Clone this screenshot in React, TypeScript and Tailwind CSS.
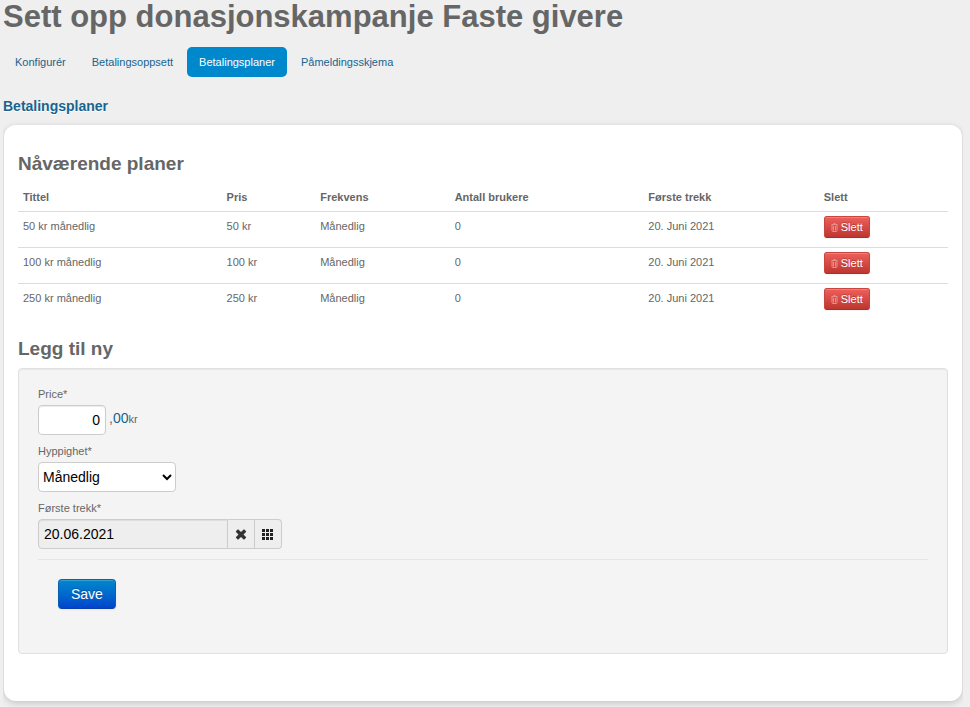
import React, { useState } from 'react';

interface Plan {
  id: number;
  title: string;
  price: string;
  frequency: string;
  users: number;
  firstCharge: string;
}

const tabs = [
  { id: 'konfigurer', label: 'Konfigurér' },
  { id: 'oppsett', label: 'Betalingsoppsett' },
  { id: 'planer', label: 'Betalingsplaner' },
  { id: 'skjema', label: 'Påmeldingsskjema' },
];

const initialPlans: Plan[] = [
  { id: 1, title: '50 kr månedlig', price: '50 kr', frequency: 'Månedlig', users: 0, firstCharge: '20. Juni 2021' },
  { id: 2, title: '100 kr månedlig', price: '100 kr', frequency: 'Månedlig', users: 0, firstCharge: '20. Juni 2021' },
  { id: 3, title: '250 kr månedlig', price: '250 kr', frequency: 'Månedlig', users: 0, firstCharge: '20. Juni 2021' },
];

const columns = ['Tittel', 'Pris', 'Frekvens', 'Antall brukere', 'Første trekk', 'Slett'];

const TrashIcon: React.FC = () => (
  <svg width="7" height="9" viewBox="0 0 7 9" fill="none" stroke="currentColor" aria-hidden="true">
    <path d="M0.5 1.5h6M1 2v5.5q0 1 1 1h3q1 0 1-1V2M2.5 0.5h2M2.5 3v4.5M4.5 3v4.5" />
  </svg>
);

const RemoveIcon: React.FC = () => (
  <svg width="12" height="11" viewBox="0 0 12 11" fill="currentColor" aria-hidden="true">
    <path d="M1 2.3 2.6 0.6Q3 0.3 3.4 0.6L6 3 8.6 0.6Q9 0.3 9.4 0.6L11 2.3Q11.3 2.7 11 3L8.5 5.5 11 8Q11.3 8.3 11 8.7L9.4 10.4Q9 10.7 8.6 10.4L6 8 3.4 10.4Q3 10.7 2.6 10.4L1 8.7Q0.7 8.3 1 8L3.5 5.5 1 3Q0.7 2.7 1 2.3Z" />
  </svg>
);

const GridIcon: React.FC = () => (
  <svg width="12" height="11" viewBox="0 0 12 11" fill="currentColor" aria-hidden="true">
    <path d="M0 0h3v3H0zM4 0h3v3H4zM8 0h3v3H8zM0 4h3v3H0zM4 4h3v3H4zM8 4h3v3H8zM0 8h3v3H0zM4 8h3v3H4zM8 8h3v3H8z" />
  </svg>
);

const Tabs: React.FC<{ active: string; onSelect: (id: string) => void }> = ({ active, onSelect }) => {
  return (
    <nav className="flex flex-wrap gap-[2px] mt-[14px]">
      {tabs.map((tab) => (
        <a
          key={tab.id}
          href={`#${tab.id}`}
          onClick={() => onSelect(tab.id)}
          className={`rounded-[5px] px-3 py-2 leading-[14px] ${
            active === tab.id ? 'bg-[#0088cc] text-white' : 'text-[#176490]'
          }`}
        >
          {tab.label}
        </a>
      ))}
    </nav>
  );
};

const PlanTable: React.FC<{ plans: Plan[]; onDelete: (id: number) => void }> = ({ plans, onDelete }) => {
  return (
    <table className="w-full text-left">
      <thead>
        <tr>
          {columns.map((column) => (
            <th key={column} className="px-[5px] py-1 font-bold">{column}</th>
          ))}
        </tr>
      </thead>
      <tbody>
        {plans.map((plan) => (
          <tr key={plan.id} className="border-t border-[#dddddd] align-top">
            <td className="px-[5px] pt-1">{plan.title}</td>
            <td className="px-[5px] pt-1">{plan.price}</td>
            <td className="px-[5px] pt-1">{plan.frequency}</td>
            <td className="px-[5px] pt-1">{plan.users}</td>
            <td className="px-[5px] pt-1">{plan.firstCharge}</td>
            <td className="px-[5px] pt-1 pb-[9px]">
              <button
                type="button"
                onClick={() => onDelete(plan.id)}
                className="flex h-[22px] items-center gap-[3px] rounded-[3px] border border-[#c84540] border-b-[#a9302a] bg-linear-to-b from-[#ee5f5b] to-[#bd362f] px-[6px] text-white shadow-[inset_0_1px_0_rgba(255,255,255,0.2),0_1px_2px_rgba(0,0,0,0.05)] [text-shadow:0_-1px_0_rgba(0,0,0,0.25)]"
              >
                <span className="text-[#ea8f8b]"><TrashIcon /></span>
                Slett
              </button>
            </td>
          </tr>
        ))}
      </tbody>
    </table>
  );
};

const NewPlanForm: React.FC = () => {
  const [price, setPrice] = useState('0');
  const [date, setDate] = useState('20.06.2021');

  return (
    <form
      onSubmit={(e) => e.preventDefault()}
      className="rounded-[4px] border border-[#e0e0e0] bg-[#f4f4f4] px-[19px] pt-[15px] pb-11 shadow-[inset_0_1px_1px_rgba(0,0,0,0.05)]"
    >
      <label htmlFor="price" className="block mb-px">Price*</label>
      <div className="flex items-start gap-[3px]">
        <input
          id="price"
          type="text"
          value={price}
          onChange={(e) => setPrice(e.target.value)}
          className="h-[30px] w-[68px] rounded-[4px] border border-[#cccccc] bg-white px-[5px] text-right text-sm text-black shadow-[inset_0_1px_1px_rgba(0,0,0,0.075)]"
        />
        <span className="pt-[3px]">
          <span className="text-sm leading-5 text-[#666666]">,</span>
          <span className="text-sm leading-5 text-[#176490]">00</span>kr
        </span>
      </div>

      <label htmlFor="frequency" className="block mt-[6px] mb-px">Hyppighet*</label>
      <select
        id="frequency"
        className="block h-[30px] w-[138px] rounded-[4px] border border-[#cccccc] bg-white text-sm text-black"
      >
        <option>Månedlig</option>
        <option>Årlig</option>
      </select>

      <label htmlFor="first-charge" className="block mt-[6px] mb-px">Første trekk*</label>
      <div className="flex text-[#333333]">
        <input
          id="first-charge"
          type="text"
          readOnly
          value={date}
          className="h-[30px] w-[190px] rounded-l-[4px] border border-[#cccccc] bg-[#eeeeee] px-[5px] text-sm text-black shadow-[inset_0_1px_1px_rgba(0,0,0,0.075)]"
        />
        <button
          type="button"
          aria-label="Fjern dato"
          onClick={() => setDate('')}
          className="flex h-[30px] w-[27px] items-center justify-center border-y border-r border-[#cccccc] bg-[#eeeeee]"
        >
          <RemoveIcon />
        </button>
        <button
          type="button"
          aria-label="Velg dato"
          className="flex h-[30px] w-[27px] items-center justify-center rounded-r-[4px] border-y border-r border-[#cccccc] bg-[#eeeeee] text-[#222222]"
        >
          <GridIcon />
        </button>
      </div>

      <div className="mt-[10px] border-t border-[#e5e5e5] px-5 pt-[19px]">
        <button
          type="submit"
          className="h-[30px] rounded-[4px] border border-[#0a5fae] border-b-[#0a3fae] bg-linear-to-b from-[#0088cc] to-[#0044cc] px-3 text-sm text-white shadow-[inset_0_1px_0_rgba(255,255,255,0.2),0_1px_2px_rgba(0,0,0,0.05)] [text-shadow:0_-1px_0_rgba(0,0,0,0.25)]"
        >
          Save
        </button>
      </div>
    </form>
  );
};

export default function App() {
  const [active, setActive] = useState('planer');
  const [plans, setPlans] = useState(initialPlans);

  return (
    <div className="min-h-screen bg-[#efefef] pl-[3px] pr-[7px] font-['Liberation_Sans',Arial,sans-serif] text-[11px] leading-5 text-[#666666]">
      <h1 className="text-[31px] leading-[33px] font-bold">Sett opp donasjonskampanje Faste givere</h1>
      <Tabs active={active} onSelect={setActive} />
      <h2 className="mt-[19px] text-sm leading-5 font-bold text-[#176490] [text-shadow:0_1px_0_#ffffff]">Betalingsplaner</h2>
      <div className="overflow-hidden px-px pt-[9px] pb-[6px]">
        <main className="rounded-[12px] bg-white px-[14px] pt-[25px] pb-[47px] shadow-[0_2px_7px_rgba(0,0,0,0.18)]">
          <h3 className="mb-[5px] text-[19px] leading-7 font-bold">Nåværende planer</h3>
          <PlanTable plans={plans} onDelete={(id) => setPlans(plans.filter((plan) => plan.id !== id))} />
          <h3 className="mt-4 mb-[5px] text-[19px] leading-7 font-bold">Legg til ny</h3>
          <NewPlanForm />
        </main>
      </div>
    </div>
  );
}
